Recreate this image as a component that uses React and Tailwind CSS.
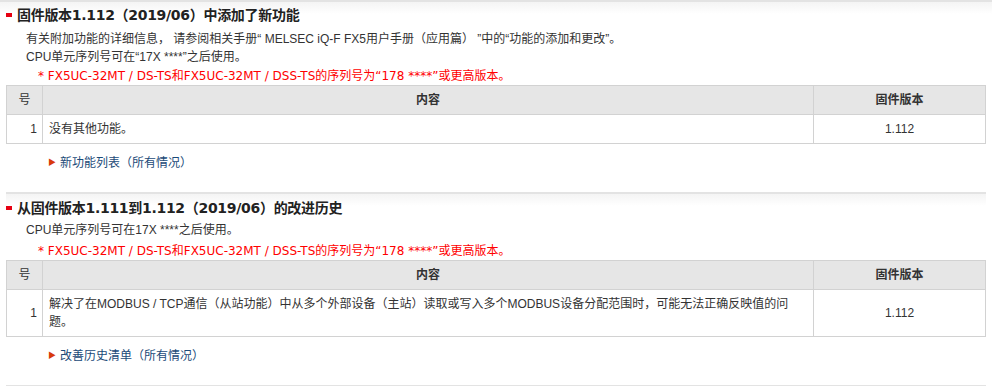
import React from 'react';

const font = { fontFamily: '"Liberation Sans", "Noto Sans CJK SC", sans-serif' };
const wide = { fontFamily: '"DejaVu Sans", "Noto Sans CJK SC", sans-serif' };

const Section = ({ title, lines, row, link, first }) => (
  <div
    className={`border-t-2 border-[#e3e3e3] bg-[linear-gradient(to_bottom,#f4f4f4,#ffffff_12px)] ${first ? '' : 'mx-[6px]'}`}
  >
    <div className={first ? 'px-[6px]' : ''}>
      <h2
        className={`flex items-center text-[14px] font-bold leading-[18px] tracking-[-0.3px] text-[#222] ${first ? 'pt-[4px]' : 'pt-[5px]'}`}
        style={wide}
      >
        <span className="mr-[5px] inline-block h-[4px] w-[6px] bg-[#e60012]" />
        {title}
      </h2>
      <div className={`pl-[20px] text-[12px] leading-[18px] text-[#333] ${first ? 'mt-[6px]' : 'mt-[4px]'}`}>
        {lines.map((l) => (
          <p key={l}>{l}</p>
        ))}
      </div>
      <p
        className={`pl-[32px] text-[12px] leading-[18px] text-[#ff0000] ${first ? 'mt-[1px]' : 'mt-[3px]'}`}
        style={wide}
      >
        * FX5UC-32MT / DS-TS和FX5UC-32MT / DSS-TS的序列号为“178 ****”或更高版本。
      </p>
      <table className="w-full border-collapse text-[12px] leading-[18px] text-[#333]">
        <thead>
          <tr className="bg-[#e6e6e6]">
            <th className="h-[29px] w-[36px] border border-[#d2d2d2] font-normal">号</th>
            <th className="border border-[#d2d2d2] font-bold">内容</th>
            <th className="w-[172px] border border-[#d2d2d2] font-bold">固件版本</th>
          </tr>
        </thead>
        <tbody>
          <tr>
            <td className="border border-[#d2d2d2] pr-[5px] text-right">1</td>
            <td className={`border border-[#d2d2d2] px-[6px] ${row.tall ? 'h-[47px]' : 'h-[29px]'}`}>{row.text}</td>
            <td className="border border-[#d2d2d2] text-center">1.112</td>
          </tr>
        </tbody>
      </table>
      <a
        href="#"
        className="ml-[42px] mt-[10px] mb-[20px] flex items-center text-[12px] leading-[18px] text-[#1b4a78]"
      >
        <span className="mr-[4px] text-[8px] text-[#d83a0c]">▶</span>
        {link}
      </a>
    </div>
  </div>
);

export default function App() {
  return (
    <div className="w-[993px] h-[386px] overflow-hidden bg-white pr-[1px]" style={font}>
      <Section
        first
        title="固件版本1.112（2019/06）中添加了新功能"
        lines={[
          '有关附加功能的详细信息， 请参阅相关手册“ MELSEC iQ-F FX5用户手册（应用篇） ”中的“功能的添加和更改”。',
          'CPU单元序列号可在“17X ****”之后使用。',
        ]}
        row={{ text: '没有其他功能。' }}
        link="新功能列表（所有情况）"
      />
      <Section
        title="从固件版本1.111到1.112（2019/06）的改进历史"
        lines={['CPU单元序列号可在17X ****之后使用。']}
        row={{
          tall: true,
          text: '解决了在MODBUS / TCP通信（从站功能）中从多个外部设备（主站）读取或写入多个MODBUS设备分配范围时，可能无法正确反映值的问题。',
        }}
        link="改善历史清单（所有情况）"
      />
      <div className="mx-[6px] border-t-2 border-[#e3e3e3]" />
    </div>
  );
}
